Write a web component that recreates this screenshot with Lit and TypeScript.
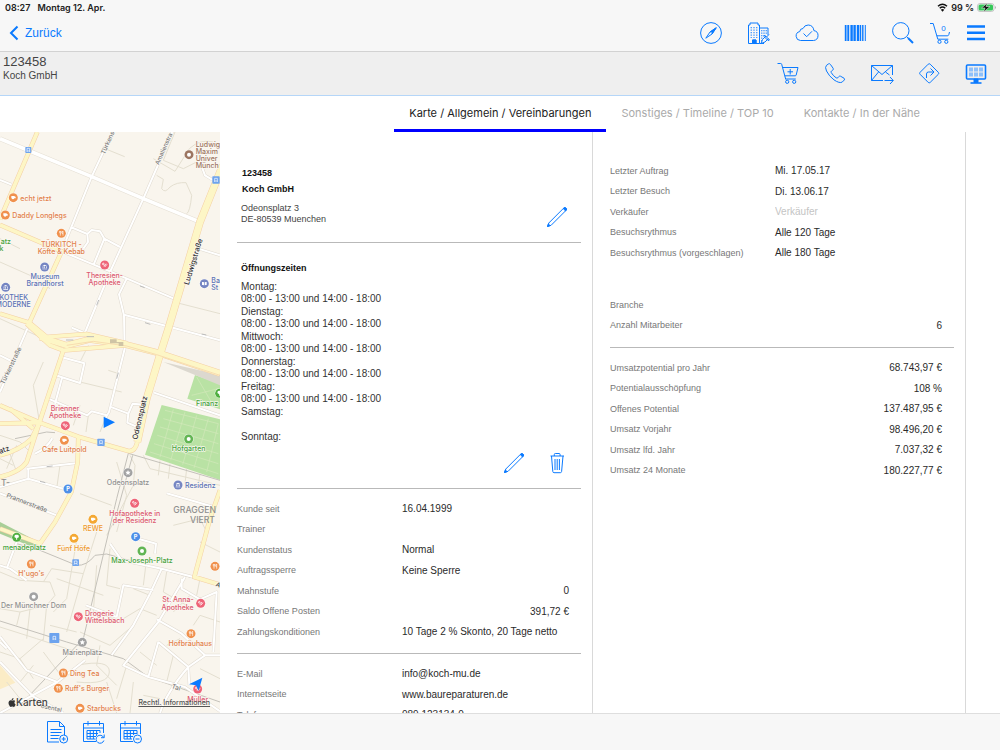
import { LitElement, html, css, svg, nothing, TemplateResult } from "lit";
import { customElement, state } from "lit/decorators.js";
import { classMap } from "lit/directives/class-map.js";

const icon = (body: TemplateResult) =>
  html`<svg class="icon" viewBox="0 0 24 24" width="24" height="24" aria-hidden="true">${body}</svg>`;

const cartBody = svg`<path d="M1.500 2.500h3.200q.8 0 1 .8L9.700 18.200M6.500 6.500h15.500l-1.800 7.500q-.2.800-1 .800H8.700M9.300 18h10.500"/><circle cx="11.200" cy="20.800" r="1.600"/><circle cx="18.200" cy="20.800" r="1.600"/>`;

const icons = {
  compass: icon(svg`<circle cx="12" cy="12" r="10.400"/><path d="M17.200 6.800 13 13 6.800 17.200 11 11Z"/><path class="solid" d="M17.200 6.800 13 13 11 11Z"/><circle class="hole" cx="12" cy="12" r=".8"/>`),
  building: icon(svg`<path d="M1.500 22.500V4H3V2h8v2h1.500v18.500H9V19H5.500v3.500ZM12.500 7H21v7M12.500 22.500H17"/><path stroke-dasharray="1.300 1.200" d="M4.200 6v11M7 6v11M9.800 6v11M14.800 9v12M17 9v6M19.200 9v4"/><path class="solid" d="M5.500 22.500V19H9v3.500Z"/><path class="pale" d="m14 22.500 1.500-4 3.500-3.500M14 22.500l4-1.500 3.500-3.500M17.500 14l5 5-1.500.500-4-4ZM19.500 16l2.500-2.500"/>`),
  cloud: icon(svg`<path d="M5.500 19.500a4.500 4.500 0 0 1-.8-8.900Q5 7.600 8 7.500 9.500 4 13.200 4q5 .2 5.700 5.600A5 5 0 0 1 18.500 19.500Z"/><path d="m8.500 12.500 3.200 3.200 5.300-5.400"/>`),
  barcode: icon(svg`<path stroke-width="1.400" d="M2.500 4v16M5.500 4v16M17.500 4v16M19.800 4v16"/><path stroke-width="2.400" d="M8.600 4v16M11.600 4v16M15 4v16"/><path stroke-width="1" d="M4.100 4v16M22.300 4v16"/>`),
  search: icon(svg`<circle cx="9.800" cy="9.800" r="8.200"/><path d="m15.800 15.800 1.600 1.600"/><path stroke-width="2" d="m17 17 5 5"/>`),
  basket: icon(svg`<path d="M2 2.500h3.200l4.600 15.700h10.500M8.800 14.800h10.500q1.200 0 1.500-1.200l.7-2.600"/><circle cx="11.500" cy="20.800" r="1.600"/><circle cx="18.300" cy="20.800" r="1.600"/>`),
  menu: icon(svg`<path stroke-width="2.600" d="M3 5.500h18M3 11.800h18M3 18h18"/>`),
  cartAdd: icon(svg`${cartBody}<path d="M14.200 8v5.500M11.500 10.800H17"/>`),
  phone: icon(svg`<path d="M5.700 2.800 3.500 4.300Q1.600 6 3.500 10q2.500 5.200 7.500 8.900 5.500 3.700 8.200 2.200l2.200-2.200q.5-1-.4-1.700l-3.500-2q-1-.4-1.700.4l-1 1.200q-.7.600-1.700 0-3.100-2.100-4.900-5.300-.4-.9.300-1.500l1.300-.9q.8-.7.400-1.700L7.500 3.500q-.8-1.200-1.800-.7Z"/>`),
  mail: icon(svg`<path d="M13 19.500H1.500v-15h21V14M1.500 4.500 12 13.500l10.500-9M1.500 19.500 8.500 11M19.500 14 15.500 11M14.500 19.500H23M20 16l3.300 3.500L20 23"/>`),
  route: icon(svg`<path d="M11.200 3.200q1-1 2 0l8.100 8.100q1 1 0 2l-8.100 8.100q-1 1-2 0l-8.100-8.100q-1-1 0-2ZM9.500 17v-4q0-2 2-2h5M13.500 7.500 17 11l-3.500 3.500"/>`),
  screen: icon(svg`<rect x="2.500" y="4" width="19" height="14" rx="1" stroke-width="1.600"/><path class="tile" d="M5 6.500h4v4H5zM10 6.500h4v4h-4zM15 6.500h4v4h-4zM5 11.500h4v4H5zM10 11.500h4v4h-4zM15 11.500h4v4h-4z"/><path class="solid" d="M10 18h4v3.500h-4z"/><path stroke-width="1.600" d="M6.500 22h11"/>`),
  pencil: icon(svg`<path d="M2.500 21.500 3.800 18 18.600 3.200Q19.700 2.400 20.800 3.300T21 5.400L6.100 20.300Z"/><path class="solid" d="M2.500 21.500 3.400 19 5 20.600ZM18.200 3.600 19 2.900Q20 2.200 21 3T21.300 5L20.500 5.900Z"/>`),
  trash: icon(svg`<path d="M5.500 5h13.500M6.500 5l1.300 15.500q.2 1.200 1.200 1.200h6.400q1 0 1.200-1.200L18 5M9.300 5V3.500q0-1 1-1h3.800q1 0 1 1V5M10 8v11M12.200 8v11M14.400 8v11"/>`),
  noteAdd: icon(svg`<path d="M14 22H2.500V1.500h12l5 5V15M14.500 1.500v5h5M5.500 9.500h11M5.500 12.500h11M5.500 15.500h9M5.500 18.500h8"/><circle class="pale" cx="18.700" cy="19" r="4"/><path d="M18.700 17v4M16.700 19h4"/>`),
  calReload: icon(svg`<path d="M14 21.500H1.500V3.500h20V13M1.500 8h20M6 1v4.500M17.500 1v4.500"/><path d="M5 10.500h13M5 13.500h11M5 16.500h9M5 19h8M5 10.500V19M8.200 10.500V19M11.400 10.500V19M14.600 10.500V16M18 10.500V13"/><path d="M21.700 17.500a4 4 0 1 0 .2 3M22.200 14.500v3.200h-3.200"/>`),
  calRemove: icon(svg`<path d="M14 21.500H1.500V3.500h20V14M1.500 8h20M6 1v4.500M17.500 1v4.500"/><path d="M5 10.500h13M5 13.500h13M5 16.500h9M5 19h8M5 10.500V19M8.200 10.500V19M11.400 10.500V19M14.600 10.500V15M18 10.500V14"/><circle class="pale" cx="18.500" cy="19" r="4"/><path d="M16.500 19h4"/>`),
};

const ORANGE = "#e2804a", RED = "#dc5a70", BLUE = "#5a72b5", GREEN = "#45a23c", GREY = "#8f8f8f", AMBER = "#ee9a2e", BROWN = "#9c7560";

type Label = [x: number, y: number, text: string, color: string, anchor?: string, rotate?: number, size?: number];
const labels: Label[] = [
  [587, 44, "Ludwig", BROWN], [587, 66, "Maxim", BROWN], [587, 87, "Univer", BROWN], [587, 109, "Münch", BROWN],
  [61, 206, "echt jetzt", ORANGE], [37, 258, "Daddy Longlegs", ORANGE],
  [184, 345, "TÜRKITCH -", ORANGE, "middle"], [184, 366, "Köfte & Kebab", ORANGE, "middle"],
  [33, 337, "atz", GREEN, "end"], [10, 358, "k", GREEN, "end"],
  [135, 442, "Museum", BLUE, "middle"], [135, 463, "Brandhorst", BLUE, "middle"],
  [84, 503, "KOTHEK", BLUE, "end"], [92, 525, "MODERNE", BLUE, "end"],
  [314, 438, "Theresien-", RED, "middle"], [314, 459, "Apotheke", RED, "middle"],
  [634, 453, "Ba", BLUE], [634, 475, "St", BLUE],
  [195, 837, "Brienner", RED, "middle"], [195, 859, "Apotheke", RED, "middle"],
  [193, 961, "Cafe Luitpold", ORANGE, "middle"],
  [588, 821, "Finanz", GREEN], [566, 958, "Hofgarten", GREEN, "middle"],
  [384, 1058, "Odeonsplatz", GREY, "middle"], [555, 1067, "Residenz", BLUE],
  [404, 1152, "Hofapotheke in", RED, "middle"], [404, 1174, "der Residenz", RED, "middle"],
  [279, 1198, "REWE", AMBER, "middle"], [221, 1257, "Fünf Höfe", AMBER, "middle"],
  [138, 1253, "menadeplatz", GREEN, "end"], [426, 1292, "Max-Joseph-Platz", GREEN, "middle"],
  [94, 1332, "H'ugo's", ORANGE, "middle"], [101, 1429, "Der Münchner Dom", GREY, "middle"],
  [581, 1410, "St. Anna-", RED, "end"], [581, 1433, "Apotheke", RED, "end"],
  [255, 1452, "Drogerie", RED], [255, 1473, "Wittelsbach", RED],
  [571, 1542, "Hofbräuhaus", ORANGE, "middle"], [247, 1569, "Marienplatz", GREY, "middle"],
  [210, 1631, "Ding Tea", ORANGE], [195, 1677, "Ruff's Burger", ORANGE], [261, 1737, "Starbucks", ORANGE],
  [593, 1709, "Müller", RED, "middle"],
  [314, 68, "Türkens", "#777", "start", -66, 19], [476, 100, "Amalienstra", "#777", "start", -66, 18],
  [566, 460, "Ludwigstraße", "#333", "start", -73, 22], [412, 924, "Odeonsplatz", "#333", "start", -77, 22],
  [12, 758, "Türkenstraße", "#777", "start", -64, 19], [18, 1095, "Prannerstraße", "#777", "start", 21, 19],
  [30, 955, "atz", "#333", "end", -20, 22], [514, 1668, "Tal", "#777", "start", 18, 19],
  [122, 1727, "osental", "#777", "start", 12, 18], [646, 1362, "A", "#333", "start", 22, 19],
];
const districts: Label[] = [
  [520, 1144, "GRAGGEN", GREY], [570, 1172, "VIERT", GREY], [30, 1062, "T-", GREY, "end"],
];

type Pin = [x: number, y: number, color: string, glyph: string];
const pins: Pin[] = [
  [567, 68, BROWN, "ring"], [40, 197, "#f0914d", "cup"], [16, 249, "#f0914d", "cup"], [184, 304, "#f0914d", "fork"],
  [134, 405, "#7585c2", "museum"], [17, 466, "#7585c2", "museum"], [314, 399, "#ee6478", "pill"], [613, 455, "#7585c2", "book"],
  [196, 881, "#ee6478", "pill"], [193, 925, "#f0914d", "cup"], [659, 784, "#4fae3f", "tree"], [566, 921, "#62b553", "ring"],
  [384, 1022, "#a2a2a2", "star"], [534, 1059, "#7585c2", "museum"], [404, 1114, "#ee6478", "pill"], [279, 1162, "#f4a833", "cup"],
  [204, 1071, "#4e8fe8", "P"], [407, 1214, "#4e8fe8", "P"], [222, 1219, "#f4a833", "cup"], [50, 1216, "#4fae3f", "tree"],
  [426, 1257, "#62b553", "ring"], [94, 1296, "#f0914d", "fork"], [645, 1303, "#f0914d", "fork"], [101, 1394, "#a2a2a2", "ring"],
  [602, 1414, "#ee6478", "pill"], [235, 1454, "#ee6478", "pill"], [573, 1505, "#f0914d", "fork"], [247, 1531, "#a2a2a2", "star"],
  [190, 1623, "#f0914d", "fork"], [175, 1669, "#f0914d", "fork"], [240, 1729, "#f0914d", "cup"], [593, 1671, "#ee6478", "pill"],
];
const glyphs: Record<string, TemplateResult> = {
  ring: svg`<circle r="6" fill="#fff"/>`,
  cup: svg`<path d="M-6-5H4v2h3v5H3q-1 3-4 3t-5-4Z" fill="#fff"/>`,
  fork: svg`<path d="M-5-7v5q0 2 2 2v7M-1-7v5q0 2-2 2M-3-7v5M5 7V-7q-4 2-3 7h3" fill="none" stroke="#fff" stroke-width="2"/>`,
  museum: svg`<path d="M-7-3 0-7 7-3ZM-6-2h2v6h-2zM-1-2h2v6h-2zM4-2h2v6H4zM-7 5H7v2H-7z" fill="#fff"/>`,
  pill: svg`<g fill="none" stroke="#fff" stroke-width="2.500"><circle cx="-4" cy="-3" r="2.500"/><path d="m-2 4 6-8M0 6 7-2"/></g>`,
  book: svg`<path d="M-7-5q4-1 6 1v9q-3-2-6-1ZM7-5q-4-1-6 1v9q3-2 6-1Z" fill="#fff"/>`,
  tree: svg`<path d="M0-8a6 5 0 0 1 1.500 10V7h-3V2A6 5 0 0 1 0-8Z" fill="#fff"/>`,
  star: svg`<path d="m0-8 2.300 5 5.700.6-4.200 3.800L5 7 0 4.200-5 7l1.200-5.600L-8-2.400-2.300-3Z" fill="#fff"/>`,
  P: svg`<text class="p" y="6" text-anchor="middle">P</text>`,
};
const stations = [[85, 54, 9], [648, 144, 11], [303, 931, 11], [227, 1292, 10], [163, 1518, 15]];

const paths = `M525 0Q500 60 490 85L550 110 590 90 600 40M460 80 525 118 568 50Q600 20 640 30M470 130 490 142 485 170Q495 185 510 165 530 150 558 152L575 190Q570 240 560 245M320 52 374 74
M0 390 90 430 150 470M60 350 0 320M522 510 660 545M185 645 0 560M130 690 100 760 120 880M325 715 350 723M265 640 240 690M240 750 365 780M300 900 320 850M265 850 258 900M350 990 380 1090 350 1200M240 1085 335 1120
M390 970 405 1000 400 1060 320 1210M430 970 450 1010 660 1060M480 985 475 1030M510 995 505 1040M560 1010 555 1055M600 1025 595 1060M0 910 60 930 90 960M0 980 40 1000M20 940 50 1020M50 940 20 1010M180 1000 170 1070M240 820 220 880
M0 1320 60 1345 150 1350 165 1390 140 1420 60 1440 0 1430M130 1350 155 1310 250 1325 290 1200M230 1225 200 1400 160 1440M170 1340 240 1365 310 1390M250 1325 200 1500M290 1300 280 1440 340 1460M60 1440 50 1480M0 1485 110 1520 230 1560M90 1430 80 1520M140 1420 130 1525M150 1480 230 1500M0 1560 60 1580 130 1520M60 1580 100 1640M130 1560 190 1640M240 1500 330 1540 400 1480M300 1540 290 1600 350 1660M320 1650 350 1743M230 1600Q330 1580 328 1620T230 1650M380 1600 350 1700M330 1250 320 1360 360 1370M440 1280 430 1360M370 1460 420 1430 470 1450M400 1370 450 1390M500 1320 490 1380 560 1420M520 1440 570 1390M600 1340 590 1390M620 1200 600 1160 520 1180M660 1260 600 1230M500 1540 540 1520M580 1480 600 1450 660 1470M420 1560 470 1600M520 1570 500 1650M600 1610 660 1640M400 1650 390 1743M430 1690 480 1700M20 1650 60 1700M100 1600 60 1650`;
const rails = "M0 1467 200 1530 370 1580 445 1635 660 1710M385 964 350 1100 250 1520 60 1720M398 970 340 1180M50 1235 120 1255 230 1300Q260 1302 285 1270L320 1266 580 1338M385 964 660 1045M45 920 140 900 165 902";
const streets = "M338 0 275 134 190 345M517 0 430 200 330 420 258 594 250 612M212 285 262 306 275 294 300 298 313 320 360 345M262 306 264 330 250 350M313 320 280 400M185 358 330 418 522 500M380 440 357 487 372 550 374 650 327 840 315 860M372 548 530 590 660 625M215 587 258 605M595 350 660 370M0 144 35 158M600 90 615 130 640 145M82 590 0 780M0 670 40 690M180 674 253 694 240 753 165 729M186 738 165 815M145 800 262 850 275 838 320 850M330 824 385 845 398 815 435 818M385 845 382 872 412 885M462 782 660 850M157 919Q140 950 105 965M80 1010 228 994M0 1065 85 1040 195 1072M85 1010V1040M0 1084 170 1150M500 1084 650 1127M395 1215 468 1235 465 1265M330 1235 365 1285 485 1310 580 1335M485 1310 450 1385 400 1480 335 1569M555 1335 475 1470 370 1600 445 1635 555 1665 660 1738M470 1462 545 1505 615 1570H660M475 1530 565 1605 568 1660M475 1530 445 1635M615 1570 565 1605Q500 1680 480 1743M545 1340V1370L600 1402 650 1380 640 1560M350 1455 370 1360 460 1374M258 1420 350 1455M52 1225 20 1310M0 1300 30 1310 80 1345M0 1514 80 1615 172 1650 255 1585M0 1590 100 1694 190 1743M0 1743 172 1650M0 1530 20 1550";
const mainRoads = "M112 0 0 262M0 279 185 358 88 572M0 545 88 572 140 615 260 606 380 634M80 575 150 640 190 655 370 640M0 820 120 872 235 914 385 957Q405 960 412 930M190 655 118 872 95 920Q60 955 0 970M118 872 80 990Q60 1020 0 1035M30 830 100 890M0 875 118 872M235 914 233 990 214 1080 165 1170 120 1235 0 1190M660 1075 630 1160 583 1335 660 1358";
const avenue = "M668 100 600 270 505 590 480 668 440 800 412 930";
const ring = "M120 615 200 640 270 622 380 638 480 664 660 724";
const boulevard = "M0 20 275 134 430 200 597 269";

const drawLabel = ([x, y, text, color, anchor = "start", rotate = 0, size = 21]: Label) =>
  svg`<text x=${x} y=${y} fill=${color} font-size=${size} text-anchor=${anchor} transform=${`rotate(${rotate} ${x} ${y})`}>${text}</text>`;

@customElement("city-map")
class CityMap extends LitElement {
  static styles = css`
    :host { display: block; position: relative; overflow: hidden; background: #f9f5ed; }
    .map { display: block; width: 100%; height: 100%; }
    .labels { font-family: Inter, sans-serif; font-weight: 500; paint-order: stroke; stroke: #fbf8f2; stroke-width: 4px; stroke-linejoin: round; }
    .districts { font-family: Inter, sans-serif; font-weight: 500; }
    .p { font: 700 17px Inter, sans-serif; fill: #fff; }
    .brand { position: absolute; left: 8px; bottom: 5px; display: flex; align-items: center; font: 500 10px/12px Inter, sans-serif; color: #444; }
    .legal { position: absolute; right: 10px; bottom: 6px; font: 500 7px/9px Inter, sans-serif; color: #555; }
  `;
  render() {
    return html`
      <svg class="map" viewBox="0 0 660 1743" preserveAspectRatio="xMinYMin slice" role="img" aria-label="Karte">
        <rect width="900" height="2400" fill="#f9f5ed"/>
        <path d="M585 729 660 755V832L562 800ZM485 819 660 862V1044L435 968Z" fill="#b9e2a4"/>
        <path d="M0 1170 120 1232 110 1250 0 1205Z" fill="#a9cf98"/>
        <path d="M490 690 660 729V760Z" fill="#dcd8cf"/>
        <path d="M0 1600 46 1652 0 1672Z" fill="#fbecc6"/>
        <g fill="none" stroke-linejoin="round">
          <path stroke="#d3e8bb" stroke-width="2" d="M495 835 655 875M490 860 655 905M480 885 655 935M472 910 655 965M462 935 655 995M450 960 655 1025M520 832 480 975M555 840 512 985M590 850 548 998M625 860 582 1008M655 875 620 1020M575 790 655 770M590 735 640 820"/>
          <path stroke="#e4dfd0" stroke-width="3" d=${paths}/>
          <path stroke="#c4c1ba" stroke-width="3" d=${rails}/>
          <path stroke="#e0dad0" stroke-width="9" d=${streets}/>
          <path stroke="#e5dfd4" stroke-width="14" d=${boulevard}/>
          <path stroke="#fff" stroke-width="6" d=${streets}/>
          <path stroke="#fff" stroke-width="11" d=${boulevard}/>
          <g stroke="#f4cfa4">
            <path stroke-width="14" d=${mainRoads}/><path stroke-width="23" d=${avenue}/><path stroke-width="20" d=${ring}/>
          </g>
          <g stroke="#fdf6c6">
            <path stroke-width="11" d=${mainRoads}/><path stroke-width="20" d=${avenue}/><path stroke-width="17" d=${ring}/>
          </g>
          <path stroke="#f4cfa4" stroke-width="2" d="M200 640 280 628 380 642 470 668 660 730"/>
          <path stroke="#bbb" stroke-width="3" d="M198 624h22M260 614h22M350 740l5-18M140 1004l18-2M120 1048l16 4M290 520l6-16M420 462l14 5M435 572l16 5M605 606l14 3"/>
        </g>
        <path d="M330 622h20v8h20v12h-14v-8h-26Z" fill="#cfc4a5"/>
        ${stations.map(([x, y, r]) => svg`<g transform=${`translate(${x} ${y})`}><rect x=${-r} y=${-r} width=${2 * r} height=${2 * r} rx="2" fill="#6da3ee"/><path d="M-4-5H4V3H-4ZM-3 3-5 6M3 3 5 6" fill="none" stroke="#fff" stroke-width="2"/></g>`)}
        ${pins.map(([x, y, color, glyph]) => svg`<g transform=${`translate(${x} ${y})`}><circle r="15" fill="#fff" opacity=".7"/><circle r="13.500" fill=${color}/>${glyphs[glyph]}</g>`)}
        <g class="labels">${labels.map(drawLabel)}</g>
        <g class="districts">${districts.map(([x, y, t, c, a]) => drawLabel([x, y, t, c, a, 0, 26]))}</g>
        <path d="M311 854 345 871 311 888Z" fill="#0a7aff"/>
        <path d="M607 1637 596 1676 588 1660 567 1657Z" fill="#0a7aff"/>
      </svg>
      <div class="brand">
        <svg width="8" height="9" viewBox="0 0 16 19" aria-hidden="true"><path fill="#333" d="M11 0q.3 2.500-1.200 3.900T7.300 5Q7 3 8.300 1.600T11 0ZM15 6.500q-2 1.200-1.900 3.500.1 2.600 2.700 3.700-.9 2.600-2.300 4.200-1.300 1.400-3 .6-2-.9-3.900 0-1.600.7-2.800-.4Q.3 14.500.6 10 1 5.500 4.700 5q1.300-.1 2.400.5 1.200.5 2.500 0Q12.900 4 15 6.500Z"/></svg>Karten
      </div>
      <a class="legal" href="#legal">Rechtl. Informationen</a>`;
  }
}

type Row = { label: string; value?: string; num?: boolean; placeholder?: boolean; href?: string };
const master: Row[] = [
  { label: "Kunde seit", value: "16.04.1999" }, { label: "Trainer" }, { label: "Kundenstatus", value: "Normal" },
  { label: "Auftragssperre", value: "Keine Sperre" }, { label: "Mahnstufe", value: "0", num: true },
  { label: "Saldo Offene Posten", value: "391,72 €", num: true },
  { label: "Zahlungskonditionen", value: "10 Tage 2 % Skonto, 20 Tage netto" },
];
const contact: Row[] = [
  { label: "E-Mail", value: "info@koch-mu.de", href: "mailto:info@koch-mu.de" },
  { label: "Internetseite", value: "www.baureparaturen.de", href: "#web" },
  { label: "Telefon", value: "089 123134-0" },
];
const visits: Row[] = [
  { label: "Letzter Auftrag", value: "Mi. 17.05.17" }, { label: "Letzter Besuch", value: "Di. 13.06.17" },
  { label: "Verkäufer", placeholder: true }, { label: "Besuchsrythmus", value: "Alle 120 Tage" },
  { label: "Besuchsrythmus (vorgeschlagen)", value: "Alle 180 Tage" },
];
const company: Row[] = [{ label: "Branche" }, { label: "Anzahl Mitarbeiter", value: "6", num: true }];
const revenue: Row[] = [
  { label: "Umsatzpotential pro Jahr", value: "68.743,97 €", num: true }, { label: "Potentialausschöpfung", value: "108 %", num: true },
  { label: "Offenes Potential", value: "137.487,95 €", num: true }, { label: "Umsatz Vorjahr", value: "98.496,20 €", num: true },
  { label: "Umsatz lfd. Jahr", value: "7.037,32 €", num: true }, { label: "Umsatz 24 Monate", value: "180.227,77 €", num: true },
];
const weekdays = ["Montag", "Dienstag", "Mittwoch", "Donnerstag", "Freitag", "Samstag", "Sonntag"];
const tabs = ["Karte / Allgemein / Vereinbarungen", "Sonstiges / Timeline / TOP 10", "Kontakte / In der Nähe"];

@customElement("app-root")
class AppRoot extends LitElement {
  @state() private active = 0;

  static styles = css`
    :host { display: flex; flex-direction: column; height: 100vh; overflow: hidden; background: #fff; color: #2a2a2a; font: 10px/12px "Liberation Sans", Arial, sans-serif; }
    button { display: block; padding: 0; border: 0; background: none; color: #0a7aff; font: inherit; cursor: pointer; }
    a { color: inherit; }
    dl, dd, h1, h2, p { margin: 0; font-size: inherit; }
    .icon { display: block; fill: none; stroke: #0a7aff; stroke-width: 1; stroke-linejoin: round; stroke-linecap: butt; }
    .icon .solid { fill: #0a7aff; }
    .icon .hole { fill: #fff; stroke: none; }
    .icon .pale { fill: #f7f7f7; }
    .icon .tile { fill: #8fc0fa; stroke: none; }

    .top { background: #f7f7f7; border-bottom: 1px solid #d2d2d2; }
    .status { display: flex; justify-content: space-between; align-items: center; height: 15px; padding: 0 4px 0 5px; font: 600 9px/15px Inter, sans-serif; color: #222; }
    .when, .power { display: flex; align-items: center; gap: 7px; }
    .power { gap: 3px; }
    .nav { display: flex; align-items: center; height: 36px; padding: 0 12px 0 9px; }
    .back { display: flex; align-items: center; gap: 6px; margin-right: auto; font-size: 12px; line-height: 16px; }
    .tools { display: flex; gap: 24px; margin-right: 13px; }
    .side { display: flex; gap: 12px; }
    .basket { position: relative; }
    .count { position: absolute; left: 0; right: 0; top: 4px; padding-left: 7px; font-size: 8px; line-height: 8px; }

    .account { display: flex; justify-content: space-between; align-items: center; height: 41px; padding: 0 12px 2px 3px; background: #efefef; border-bottom: 1px solid #b5d6f8; }
    .who { align-self: flex-start; padding-top: 2px; color: #444; line-height: 13px; }
    .number { font-size: 13px; line-height: 15px; font-weight: 400; }
    .actions { display: flex; gap: 23px; }

    .tabs { display: flex; justify-content: flex-end; flex: none; height: 36px; padding-right: 65px; }
    .tab { padding: 2px 15px 0; border-bottom: 3px solid transparent; color: #aaa; font: 11px/31px Inter, sans-serif; }
    .tab.on { color: #222; border-color: #0000ff; }

    .content { flex: 1; min-height: 0; display: grid; grid-template-columns: 220px minmax(0, 373fr) minmax(0, 373fr) minmax(0, 34fr); }
    .column { min-height: 0; overflow-y: auto; scrollbar-width: none; padding: 0 11px 0 17px; border-right: 1px solid #d9d9d9; }
    .section { padding-right: 12px; }
    .section + .section { border-top: 1px solid #b9b9b9; }
    .customer { display: flex; justify-content: space-between; align-items: flex-end; padding-top: 33px; padding-bottom: 13px; }
    .title { padding-left: 5px; font: bold 9px/16px "Liberation Sans", Arial, sans-serif; color: #111; }
    .address { margin: 6px 0 4px; padding-left: 4px; font-size: 9px; line-height: 11px; color: #444; }
    .hours { padding-top: 17px; padding-bottom: 13px; }
    .hours .title { padding-left: 4px; }
    .days { margin-top: 4px; padding-left: 4px; color: #333; }
    .day { line-height: 13px; }
    .slot { height: 12px; line-height: 12px; }
    .edit { display: flex; justify-content: flex-end; gap: 19px; margin-top: 8px; }
    .rows { padding-top: 10px; padding-bottom: 11px; }
    .row { display: grid; grid-template-columns: 165px minmax(0, 1fr); line-height: 20px; }
    .row:nth-child(even) { line-height: 21px; }
    .label { font-size: 9px; color: #777; white-space: nowrap; }
    .value { white-space: nowrap; }
    .value.num { text-align: right; }
    .link { text-decoration: none; }
    .field { display: block; width: 100%; height: 20px; padding: 0; border: 0; outline: 0; background: none; font: inherit; color: #222; }
    .field::placeholder { color: #c4c4c4; opacity: 1; }
    .first { padding-top: 29px; }
    .gap { margin-top: 32px; }
    .bottom { display: flex; align-items: center; gap: 13px; flex: none; height: 36px; padding-left: 45px; background: #f7f7f7; border-top: 1px solid #dedede; }
  `;

  private rows(list: Row[]) {
    return list.map((r) => html`<div class="row">
      <dt class="label">${r.placeholder ? html`<label for="seller">${r.label}</label>` : r.label}</dt>
      <dd class=${classMap({ value: true, num: !!r.num })}>${r.placeholder
        ? html`<input class="field" id="seller" placeholder="Verkäufer">`
        : r.href ? html`<a class="link" href=${r.href}>${r.value}</a>` : r.value ?? nothing}</dd>
    </div>`);
  }

  private tool(name: string, shape: TemplateResult) {
    return html`<button aria-label=${name}>${shape}</button>`;
  }

  render() {
    return html`
      <header class="top">
        <div class="status">
          <div class="when"><span>08:27</span><span>Montag 12. Apr.</span></div>
          <div class="power">
            <svg width="11" height="9" viewBox="0 0 22 17" aria-hidden="true"><g fill="none" stroke="#111" stroke-width="3"><path d="M2 6q9-8 18 0M5.500 10q5.500-5 11 0"/></g><path d="M7.500 13q3.500-3 7 0L11 17Z" fill="#111"/></svg>
            <span>99 %</span>
            <svg width="19" height="9" viewBox="0 0 38 18" aria-hidden="true"><rect x="1" y="1" width="33" height="16" rx="5" fill="#f7f7f7" stroke="#b5b5b5" stroke-width="1.500"/><rect x="3" y="3" width="29" height="12" rx="3" fill="#35c759"/><path d="M36 6q3 3 0 6Z" fill="#999"/><path d="M21 0 9 10h7l-3 8L26 7h-8Z" fill="#111" stroke="#f7f7f7"/></svg>
          </div>
        </div>
        <nav class="nav">
          <button class="back"><svg width="10" height="16" viewBox="0 0 10 16" aria-hidden="true"><path d="M8.500 1.500 2 8l6.500 6.500" fill="none" stroke="#0a7aff" stroke-width="2"/></svg>Zurück</button>
          <div class="tools">
            ${this.tool("Kompass", icons.compass)}${this.tool("Firma", icons.building)}${this.tool("Synchronisation", icons.cloud)}${this.tool("Barcode", icons.barcode)}${this.tool("Suche", icons.search)}
          </div>
          <div class="side">
            <button class="basket" aria-label="Warenkorb">${icons.basket}<span class="count">0</span></button>
            ${this.tool("Menü", icons.menu)}
          </div>
        </nav>
      </header>
      <div class="account">
        <div class="who"><h1 class="number">123458</h1><p>Koch GmbH</p></div>
        <div class="actions">
          ${this.tool("Neuer Auftrag", icons.cartAdd)}${this.tool("Anrufen", icons.phone)}${this.tool("E-Mail senden", icons.mail)}${this.tool("Route", icons.route)}${this.tool("Präsentation", icons.screen)}
        </div>
      </div>
      <div class="tabs" role="tablist">
        ${tabs.map((t, i) => html`<button role="tab" aria-selected=${i === this.active ? "true" : "false"} class=${classMap({ tab: true, on: i === this.active })} @click=${() => (this.active = i)}>${t}</button>`)}
      </div>
      <main class="content">
        <city-map></city-map>
        <div class="column">
          <section class="section customer">
            <div>
              <h2 class="title">123458</h2>
              <h2 class="title">Koch GmbH</h2>
              <p class="address">Odeonsplatz 3<br>DE-80539 Muenchen</p>
            </div>
            ${this.tool("Adresse bearbeiten", icons.pencil)}
          </section>
          <section class="section hours">
            <h2 class="title">Öffnungszeiten</h2>
            <dl class="days">
              ${weekdays.map((d, i) => html`<dt class="day">${d}:</dt>${i < 6 ? html`<dd class="slot">${i < 5 ? "08:00 - 13:00 und 14:00 - 18:00" : nothing}</dd>` : nothing}`)}
            </dl>
            <div class="edit">${this.tool("Öffnungszeiten bearbeiten", icons.pencil)}${this.tool("Öffnungszeiten löschen", icons.trash)}</div>
          </section>
          <dl class="section rows">${this.rows(master)}</dl>
          <dl class="section rows">${this.rows(contact)}</dl>
        </div>
        <div class="column">
          <div class="section rows first">
            <dl>${this.rows(visits)}</dl>
            <dl class="gap">${this.rows(company)}</dl>
          </div>
          <dl class="section rows">${this.rows(revenue)}</dl>
        </div>
      </main>
      <footer class="bottom">
        ${this.tool("Neue Notiz", icons.noteAdd)}${this.tool("Termin verschieben", icons.calReload)}${this.tool("Termin entfernen", icons.calRemove)}
      </footer>`;
  }
}
